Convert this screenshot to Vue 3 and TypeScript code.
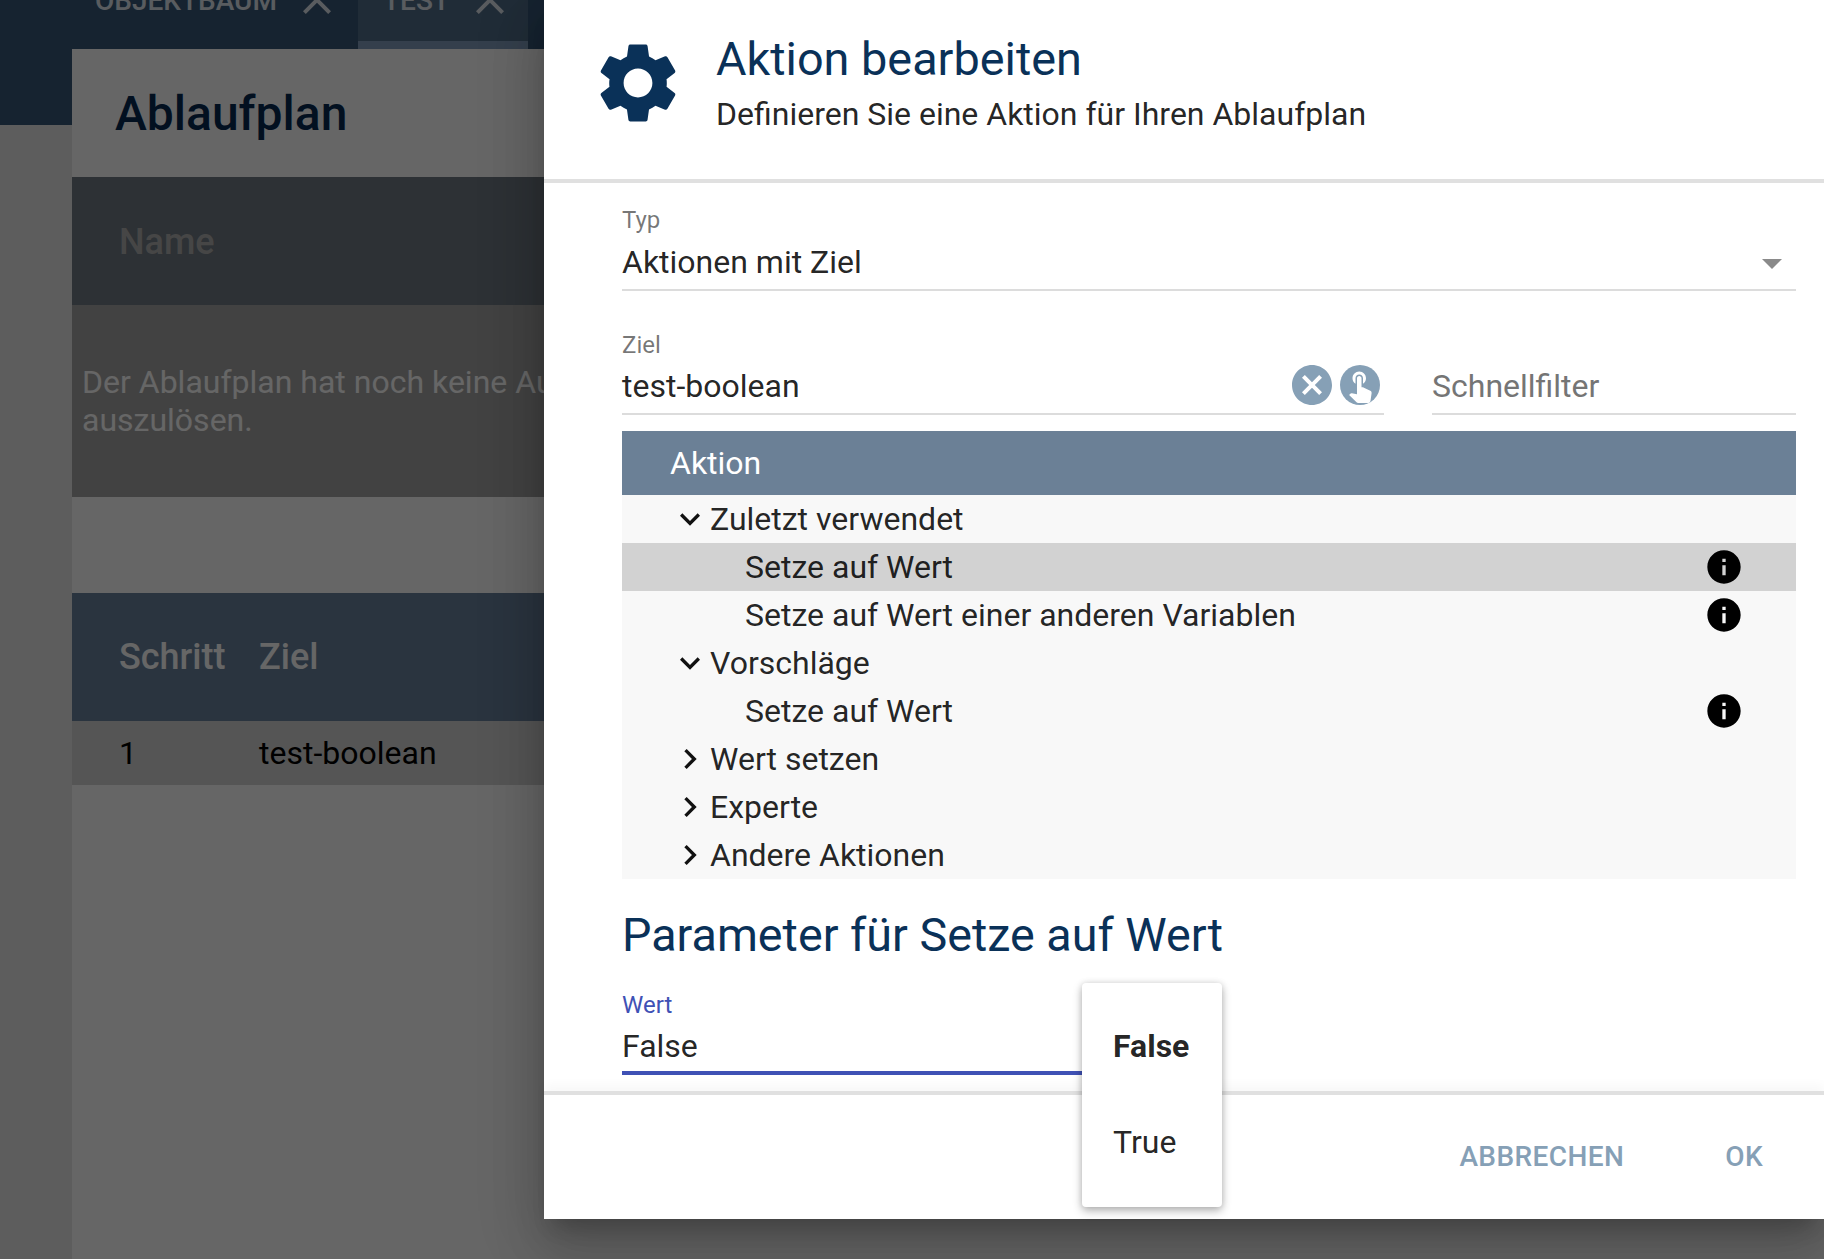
<script setup lang="ts">
interface TreeRow {
  label: string
  level: 1 | 2
  icon?: 'open' | 'closed'
  selected?: boolean
}

const rows: TreeRow[] = [
  { label: 'Zuletzt verwendet', level: 1, icon: 'open' },
  { label: 'Setze auf Wert', level: 2, selected: true },
  { label: 'Setze auf Wert einer anderen Variablen', level: 2 },
  { label: 'Vorschläge', level: 1, icon: 'open' },
  { label: 'Setze auf Wert', level: 2 },
  { label: 'Wert setzen', level: 1, icon: 'closed' },
  { label: 'Experte', level: 1, icon: 'closed' },
  { label: 'Andere Aktionen', level: 1, icon: 'closed' }
]
</script>

<template>
  <div class="page">
    <header class="topbar">
      <div class="tab">
        <span>OBJEKTBAUM</span>
        <svg class="tab-x" viewBox="0 0 24 24"><path d="M19 6.41L17.59 5 12 10.59 6.41 5 5 6.41 10.59 12 5 17.59 6.41 19 12 13.41 17.59 19 19 17.59 13.41 12z" /></svg>
      </div>
      <div class="tab tab-active">
        <span>TEST</span>
        <svg class="tab-x" viewBox="0 0 24 24"><path d="M19 6.41L17.59 5 12 10.59 6.41 5 5 6.41 10.59 12 5 17.59 6.41 19 12 13.41 17.59 19 19 17.59 13.41 12z" /></svg>
      </div>
    </header>

    <main class="card">
      <h1 class="card-title">Ablaufplan</h1>
      <div class="name-bar">Name</div>
      <div class="desc">Der Ablaufplan hat noch keine Auslöser, um Schritte<br />auszulösen.</div>
      <div class="thead">
        <span class="col-step">Schritt</span>
        <span>Ziel</span>
      </div>
      <div class="trow">
        <span class="col-step">1</span>
        <span>test-boolean</span>
      </div>
    </main>

    <div class="scrim"></div>

    <section class="dialog">
      <header class="dialog-head">
        <svg class="gear" viewBox="0 0 24 24"><path d="M19.14 12.94c.04-.3.06-.61.06-.94 0-.32-.02-.64-.07-.94l2.03-1.58c.18-.14.23-.41.12-.61l-1.92-3.32c-.12-.22-.37-.29-.59-.22l-2.39.96c-.5-.38-1.03-.7-1.62-.94l-.36-2.54c-.04-.24-.24-.41-.48-.41h-3.84c-.24 0-.43.17-.47.41l-.36 2.54c-.59.24-1.13.57-1.62.94l-2.39-.96c-.22-.08-.47 0-.59.22L2.74 8.87c-.12.21-.08.47.12.61l2.03 1.58c-.05.3-.09.63-.09.94s.02.64.07.94l-2.03 1.58c-.18.14-.23.41-.12.61l1.92 3.32c.12.22.37.29.59.22l2.39-.96c.5.38 1.03.7 1.62.94l.36 2.54c.05.24.24.41.48.41h3.84c.24 0 .44-.17.47-.41l.36-2.54c.59-.24 1.13-.56 1.62-.94l2.39.96c.22.08.47 0 .59-.22l1.92-3.32c.12-.22.07-.47-.12-.61l-2.01-1.58zM12 15.6c-1.98 0-3.6-1.62-3.6-3.6s1.62-3.6 3.6-3.6 3.6 1.62 3.6 3.6-1.62 3.6-3.6 3.6z" /></svg>
        <div class="head-text">
          <h2 class="dialog-title">Aktion bearbeiten</h2>
          <p class="dialog-sub">Definieren Sie eine Aktion für Ihren Ablaufplan</p>
        </div>
      </header>

      <div class="dialog-body">
        <div class="field field-typ">
          <label class="field-label">Typ</label>
          <div class="field-value">
            <span>Aktionen mit Ziel</span>
            <span class="caret"></span>
          </div>
        </div>

        <div class="target-row">
          <div class="field field-target">
            <label class="field-label">Ziel</label>
            <div class="field-value">
              <span>test-boolean</span>
              <span class="round-btns">
                <span class="round round-clear">
                  <svg viewBox="0 0 24 24"><path d="M12 2C6.47 2 2 6.47 2 12s4.47 10 10 10 10-4.47 10-10S17.53 2 12 2zm5 13.59L15.59 17 12 13.41 8.41 17 7 15.59 10.59 12 7 8.41 8.41 7 12 10.59 15.59 7 17 8.41 13.41 12 17 15.59z" /></svg>
                </span>
                <span class="round round-pick">
                  <svg viewBox="0 0 24 24"><path d="M9 11.24V7.5C9 6.12 10.12 5 11.5 5S14 6.12 14 7.5v3.74c1.21-.81 2-2.18 2-3.74C16 5.01 13.99 3 11.5 3S7 5.01 7 7.5c0 1.56.79 2.93 2 3.74zm9.84 4.63l-4.54-2.26c-.17-.07-.35-.11-.54-.11H13v-6c0-.83-.67-1.5-1.5-1.5S10 6.67 10 7.5v10.74l-3.43-.72c-.08-.01-.15-.03-.24-.03-.31 0-.59.13-.79.33l-.79.8 4.94 4.94c.27.27.65.44 1.06.44h6.79c.75 0 1.33-.55 1.44-1.28l.75-5.27c.01-.07.02-.14.02-.2 0-.62-.38-1.16-.91-1.38z" /></svg>
                </span>
              </span>
            </div>
          </div>
          <div class="field field-filter">
            <div class="field-value placeholder">Schnellfilter</div>
          </div>
        </div>

        <div class="tree">
          <div class="tree-head">Aktion</div>
          <div
            v-for="(row, i) in rows"
            :key="i"
            class="tree-row"
            :class="{ selected: row.selected, leaf: row.level === 2 }"
          >
            <svg v-if="row.icon === 'open'" class="chev" viewBox="0 0 24 24"><path d="M16.59 8.59L12 13.17 7.41 8.59 6 10l6 6 6-6z" /></svg>
            <svg v-else-if="row.icon === 'closed'" class="chev" viewBox="0 0 24 24"><path d="M10 6L8.59 7.41 13.17 12l-4.58 4.59L10 18l6-6z" /></svg>
            <span class="tree-label">{{ row.label }}</span>
            <svg v-if="row.level === 2" class="info" viewBox="0 0 24 24"><path d="M12 2C6.48 2 2 6.48 2 12s4.48 10 10 10 10-4.48 10-10S17.52 2 12 2zm1 15h-2v-6h2v6zm0-8h-2V7h2v2z" /></svg>
          </div>
        </div>

        <h3 class="param-title">Parameter für Setze auf Wert</h3>

        <div class="field field-wert">
          <label class="field-label">Wert</label>
          <div class="field-value">False</div>
        </div>
      </div>

      <footer class="dialog-foot">
        <button class="btn btn-cancel" type="button">ABBRECHEN</button>
        <button class="btn" type="button">OK</button>
      </footer>

      <ul class="menu">
        <li class="menu-item menu-current">False</li>
        <li class="menu-item">True</li>
      </ul>
    </section>
  </div>
</template>

<style>
html, body { margin: 0; padding: 0; }
</style>

<style scoped>
.page {
  position: relative;
  width: 1824px;
  height: 1259px;
  overflow: hidden;
  background: #e8e8e8;
  font-family: Roboto, "Liberation Sans", sans-serif;
  color: rgba(0, 0, 0, 0.87);
}

/* Page behind the scrim */
.topbar {
  display: flex;
  height: 125px;
  padding-left: 67px;
  box-sizing: border-box;
  background: #375878;
  overflow: hidden;
}
.tab {
  display: flex;
  align-items: flex-start;
  width: 291px;
  height: 65px;
  padding-left: 28px;
  box-sizing: border-box;
  margin-top: -16px;
  color: #dfe6ee;
  font-size: 28px;
  font-weight: 500;
  line-height: 34px;
}
.tab-active {
  width: 170px;
  padding-left: 25px;
  background: #526e89;
  border-bottom: 8px solid #829fbf;
}
.tab-active .tab-x { margin-left: 16px; }
.tab-x {
  width: 48px;
  height: 48px;
  margin-top: -8px;
  margin-left: 16px;
  flex: none;
  fill: #dfe6ee;
}
.card {
  height: 1300px;
  margin: -76px 0 0 72px;
  background: #fff;
}
.card-title {
  height: 128px;
  margin: 0;
  padding-left: 43px;
  box-sizing: border-box;
  font-size: 48px;
  font-weight: 500;
  line-height: 130px;
  color: #062a52;
}
.name-bar {
  height: 128px;
  padding-left: 47px;
  box-sizing: border-box;
  background: #707a84;
  color: #b0b0b0;
  font-size: 36px;
  font-weight: 500;
  line-height: 130px;
}
.desc {
  height: 192px;
  padding: 58px 0 0 10px;
  box-sizing: border-box;
  background: #a5a5a5;
  color: #fff;
  font-size: 32px;
  font-weight: 400;
  line-height: 38px;
  white-space: nowrap;
}
.thead {
  display: flex;
  height: 128px;
  margin-top: 96px;
  padding-left: 47px;
  box-sizing: border-box;
  background: #69829d;
  color: #fff;
  font-size: 36px;
  font-weight: 500;
  line-height: 128px;
}
.trow {
  display: flex;
  height: 64px;
  padding-left: 47px;
  box-sizing: border-box;
  background: #d4d4d4;
  color: #000;
  font-size: 32px;
  line-height: 64px;
}
.col-step { width: 140px; }
.scrim {
  position: absolute;
  inset: 0;
  background: rgba(0, 0, 0, 0.6);
}

/* Dialog */
.dialog {
  position: absolute;
  top: 0;
  left: 544px;
  right: 0;
  height: 1219px;
  display: flex;
  flex-direction: column;
  background: #fff;
  box-shadow: 0 16px 20px -10px rgba(0, 0, 0, 0.2), 0 32px 48px 4px rgba(0, 0, 0, 0.14), 0 12px 60px 10px rgba(0, 0, 0, 0.12);
}
.dialog-head {
  display: flex;
  flex: none;
  height: 183px;
  padding: 27px 0 0 46px;
  box-sizing: border-box;
  border-bottom: 4px solid #e0e0e0;
}
.gear {
  width: 96px;
  height: 96px;
  margin-top: 8px;
  flex: none;
  fill: #0a3158;
}
.head-text { margin-left: 30px; }
.dialog-title {
  margin: 0;
  font-size: 46.8px;
  font-weight: 400;
  line-height: 64px;
  color: #0a3158;
}
.dialog-sub {
  margin: -1px 0 0;
  font-size: 32px;
  line-height: 48px;
}
.dialog-body {
  flex: 1;
  min-height: 0;
  padding: 23px 28px 0 78px;
  overflow: hidden;
}
.field-label {
  display: block;
  font-size: 24px;
  line-height: 28px;
  color: rgba(0, 0, 0, 0.54);
}
.field-value {
  display: flex;
  align-items: center;
  justify-content: space-between;
  margin-top: 9px;
  font-size: 32px;
  line-height: 38px;
}
.field-typ .field-value,
.field-target .field-value,
.field-filter .field-value {
  padding-bottom: 8px;
  border-bottom: 2px solid #dcdcdc;
}
.field-target .field-value { margin-top: 8px; }
.caret {
  width: 0;
  height: 0;
  margin: 3px 14px 0 0;
  border-left: 10px solid transparent;
  border-right: 10px solid transparent;
  border-top: 10px solid #8a8a8a;
}
.target-row {
  display: flex;
  align-items: flex-end;
  gap: 48px;
  margin-top: 40px;
}
.field-target { width: 762px; flex: none; }
.field-filter { flex: 1; }
.placeholder { color: #757575; }
.round-btns {
  display: flex;
  gap: 8px;
  padding-right: 4px;
}
.round {
  display: flex;
  align-items: center;
  justify-content: center;
  width: 40px;
  height: 40px;
  margin-top: -2px;
  border-radius: 50%;
}
.round-clear svg {
  width: 48px;
  height: 48px;
  flex: none;
  fill: #86a0b6;
}
.round-pick { background: #86a0b6; }
.round-pick svg {
  width: 36px;
  height: 36px;
  flex: none;
  fill: #fff;
}
.tree {
  margin-top: 16px;
  background: #f8f8f8;
}
.tree-head {
  height: 64px;
  padding-left: 48px;
  background: #6b8096;
  color: #fff;
  font-size: 32px;
  line-height: 64px;
}
.tree-row {
  display: flex;
  align-items: center;
  height: 48px;
  padding-left: 48px;
  padding-right: 52px;
  font-size: 32px;
}
.tree-row.leaf { padding-left: 123px; }
.tree-row.selected { background: #d2d2d2; }
.chev {
  width: 40px;
  height: 40px;
  flex: none;
  fill: #111;
}
.tree-label { flex: 1; }
.info {
  width: 40px;
  height: 40px;
  flex: none;
  fill: #000;
}
.param-title {
  margin: 28px 0 0;
  font-size: 46.7px;
  font-weight: 400;
  line-height: 56px;
  color: #0a3158;
}
.field-wert { margin-top: 28px; }
.field-wert .field-label { color: #3f51b5; }
.field-wert .field-value {
  margin-top: 8px;
  padding-bottom: 6px;
  border-bottom: 4px solid #3f51b5;
  width: 520px;
}
.dialog-foot {
  display: flex;
  flex: none;
  height: 128px;
  box-sizing: border-box;
  padding: 0 61px 1px 0;
  align-items: center;
  justify-content: flex-end;
  gap: 101px;
  border-top: 4px solid #e0e0e0;
  box-shadow: 0 -6px 10px rgba(0, 0, 0, 0.03);
}
.btn {
  padding: 0;
  border: 0;
  background: none;
  font-family: inherit;
  font-size: 28px;
  font-weight: 500;
  letter-spacing: 0.4px;
  line-height: 36px;
  color: #86a0b6;
}
.menu {
  position: absolute;
  top: 983px;
  left: 538px;
  width: 140px;
  height: 224px;
  margin: 0;
  padding: 15px 0;
  box-sizing: border-box;
  list-style: none;
  background: #fff;
  border-radius: 4px;
  box-shadow: 0 4px 10px rgba(0, 0, 0, 0.28), 0 0 6px rgba(0, 0, 0, 0.12);
}
.menu-item {
  height: 96px;
  padding-left: 31px;
  font-size: 32px;
  line-height: 96px;
}
.menu-current { font-weight: 700; }
</style>
